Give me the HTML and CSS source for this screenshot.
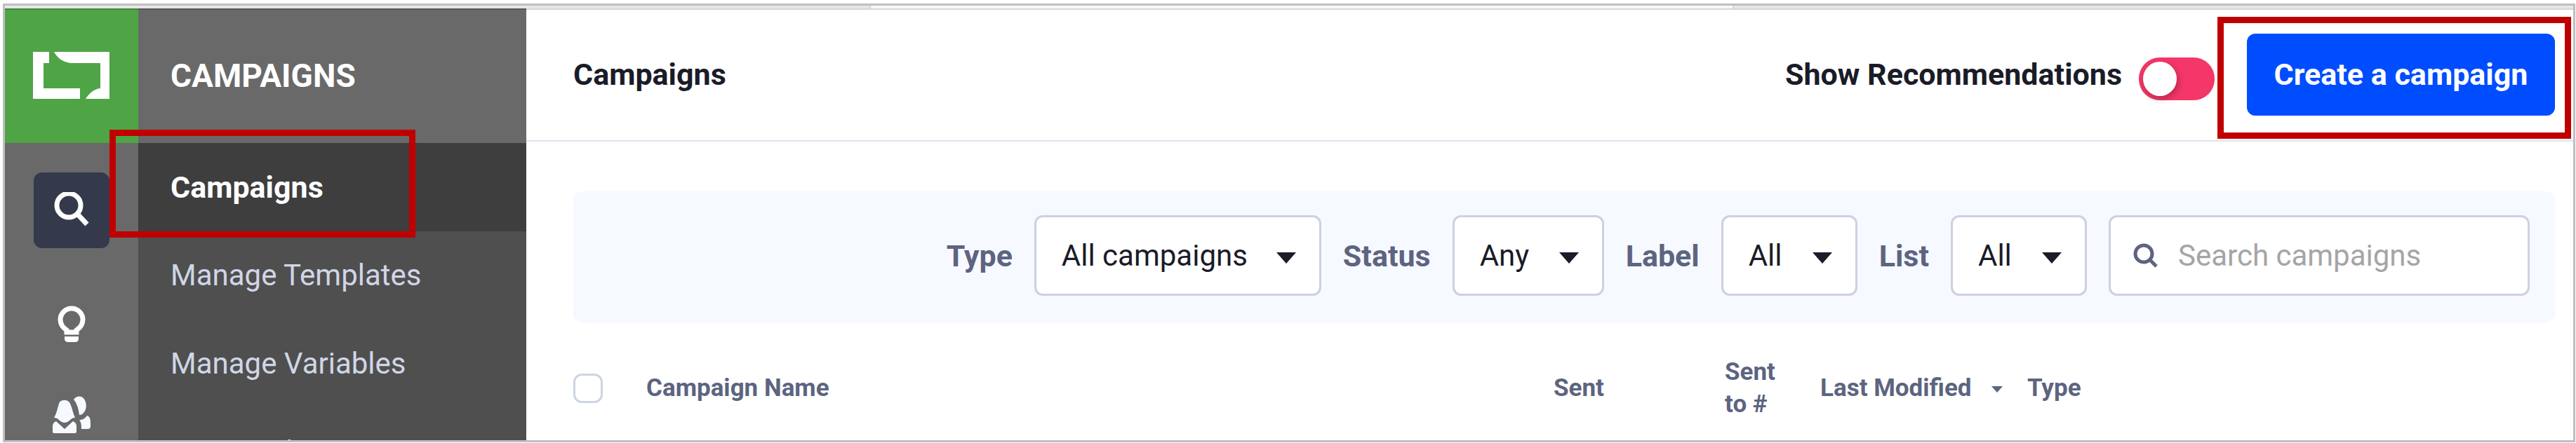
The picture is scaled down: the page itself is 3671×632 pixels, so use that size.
FILE: index.html
```html
<!DOCTYPE html>
<html lang="en">
<head>
    <meta charset="UTF-8">
    <meta name="viewport" content="width=device-width, initial-scale=1.0">
    <title>Campaigns</title>
    <link rel="stylesheet" href="styles.css">
</head>
<body>
    <div class="frame">
        <div class="tab-strip">
            <span></span>
            <span class="current"></span>
            <span></span>
        </div>
        <div class="app">
            <nav class="rail" aria-label="Main">
                <a href="#" class="logo" aria-label="Home">
                    <svg width="110" height="68" viewBox="0 0 110 68" fill="#fff">
                        <path d="M0 0H23V16H15V52H67V67H0Z"/>
                        <path d="M30 0H109V67H75C80 59 87 53 96 52V16H53C42 14 35 9 30 0Z"/>
                    </svg>
                </a>
                <a href="#" class="rail-link search" aria-label="Search">
                    <svg width="52" height="52" viewBox="0 0 52 52" fill="none" stroke="#fff" stroke-width="7">
                        <circle cx="22" cy="19" r="17"/>
                        <path d="M34 31L48 46"/>
                    </svg>
                </a>
                <a href="#" class="rail-link" aria-label="Insights">
                    <svg width="40" height="52" viewBox="0 0 40 52">
                        <path d="M13 38V35C7 31 4 26 4 20A16 16 0 0 1 36 20C36 26 33 31 27 35V38Z" fill="none" stroke="#fff" stroke-width="7"/>
                        <path d="M10 44H30V47Q30 52 25 52H15Q10 52 10 47Z" fill="#fff"/>
                    </svg>
                </a>
                <a href="#" class="rail-link people" aria-label="Audience">
                    <svg width="55" height="54" viewBox="0 0 55 54" fill="#f6f9ff">
                        <path d="M2 31C6 24 7 17 9 11C10 7 13 6 17 6C21 6 24 8 25 11C28 17 29 25 32 31C28 31 26 33 24 35C19 39 15 39 10 35C8 33 6 31 2 31Z"/>
                        <path d="M5 36L17 47L29 36Q34 38 34 43V51Q34 53 32 53H2Q0 53 0 51V43Q0 38 5 36Z"/>
                        <path d="M30 5C33 0 40 -1 44 3C49 9 49 19 44 24Q42 27 38 27C37 19 35 11 30 5Z"/>
                        <path d="M38 34C43 34 46 32 49 28C53 29 54 33 54 38V43Q54 47 50 47H41C41 42 41 38 38 34Z"/>
                    </svg>
                </a>
            </nav>

            <aside class="menu">
                <h2>CAMPAIGNS</h2>
                <ul>
                    <li class="active"><a href="#">Campaigns</a><div class="highlight"></div></li>
                    <li><a href="#">Manage Templates</a></li>
                    <li><a href="#">Manage Variables</a></li>
                    <li><a href="#">View Archives</a></li>
                </ul>
            </aside>

            <main>
                <header>
                    <h1>Campaigns</h1>
                    <label for="recommendations">Show Recommendations</label>
                    <input type="checkbox" id="recommendations" class="toggle">
                    <div class="create">
                        <button class="btn">Create a campaign</button>
                        <div class="highlight"></div>
                    </div>
                </header>

                <form class="filters">
                    <label for="type">Type</label>
                    <div class="select type">
                        <select id="type"><option>All campaigns</option></select>
                    </div>
                    <label for="status">Status</label>
                    <div class="select status">
                        <select id="status"><option>Any</option></select>
                    </div>
                    <label for="label">Label</label>
                    <div class="select">
                        <select id="label"><option>All</option></select>
                    </div>
                    <label for="list">List</label>
                    <div class="select">
                        <select id="list"><option>All</option></select>
                    </div>
                    <div class="search-box">
                        <svg width="36" height="36" viewBox="0 0 36 36" fill="none" stroke="#5d6480" stroke-width="5">
                            <circle cx="15" cy="15" r="12"/>
                            <path d="M23 23L33 33"/>
                        </svg>
                        <input type="text" placeholder="Search campaigns" aria-label="Search campaigns">
                    </div>
                </form>

                <table>
                    <thead>
                        <tr>
                            <th class="col-check"><input type="checkbox" aria-label="Select all"></th>
                            <th>Campaign Name</th>
                            <th class="col-sent">Sent</th>
                            <th class="col-count">Sent to #</th>
                            <th class="col-modified">Last Modified <span class="sort"></span></th>
                            <th class="col-type">Type</th>
                        </tr>
                    </thead>
                </table>
            </main>
        </div>
    </div>
</body>
</html>
```
FILE: styles.css
```css
* {
    box-sizing: border-box;
}
body {
    margin: 0;
    padding: 5px 1px 1px 4px;
    height: 100vh;
    font-family: Roboto, "Liberation Sans", sans-serif;
    font-size: 42px;
    color: #1a1c28;
    background: white;
}
a {
    color: inherit;
    text-decoration: none;
}
.frame {
    height: 100%;
    display: flex;
    flex-direction: column;
    border: 3px solid #bfbfbf;
    overflow: hidden;
}
.tab-strip {
    display: grid;
    grid-template-columns: 101fr 101fr 98fr;
    flex: 0 0 4px;
}
.tab-strip span {
    background: #e9e5e5;
}
.tab-strip .current {
    background: #fbf5f5;
    border-left: 2px solid #d5d2d2;
    border-right: 2px solid #d5d2d2;
}
.app {
    position: relative;
    display: flex;
    flex: 1;
    min-height: 0;
}
.app::after {
    content: "";
    position: absolute;
    top: 0;
    left: 0;
    right: 0;
    height: 2px;
    background: rgba(0, 0, 0, 0.16);
}

/* icon rail */
.rail {
    width: 190px;
    flex-shrink: 0;
    background: #696969;
    display: flex;
    flex-direction: column;
    align-items: center;
}
.logo {
    width: 100%;
    height: 192px;
    flex-shrink: 0;
    display: flex;
    align-items: center;
    justify-content: center;
    background: #4fa446;
}
.rail-link {
    width: 108px;
    height: 108px;
    flex-shrink: 0;
    margin-top: 42px;
    border-radius: 12px;
    display: flex;
    align-items: center;
    justify-content: center;
}
.rail-link + .rail-link {
    margin-top: 54px;
}
.rail-link.people {
    margin-top: 22px;
}
.rail-link.search {
    background: #343a4c;
}

/* section menu */
.menu {
    width: 553px;
    flex-shrink: 0;
    background: #4f4f4f;
}
.menu h2 {
    margin: 0;
    height: 192px;
    padding-left: 46px;
    line-height: 192px;
    font-size: 46px;
    color: white;
    background: #696969;
}
.menu ul {
    margin: 0;
    padding: 0;
    list-style: none;
}
.menu li {
    position: relative;
    height: 126px;
    padding-left: 46px;
    line-height: 126px;
    color: #d0d6e6;
}
.menu .active {
    color: white;
    font-size: 43px;
    font-weight: bold;
    background: #3e3e3e;
}
.highlight {
    position: absolute;
    border: 9px solid #c00000;
    pointer-events: none;
}
.menu .highlight {
    top: -19px;
    bottom: -9px;
    left: -41px;
    width: 436px;
}

main {
    flex: 1;
    min-width: 0;
}
header {
    height: 190px;
    padding: 0 26px 0 67px;
    display: flex;
    align-items: center;
    font-size: 43px;
    font-weight: bold;
    border-bottom: 2px solid #dfe3ee;
}
h1 {
    flex: 1;
    margin: 0;
    font-size: 43px;
}
.toggle {
    appearance: none;
    width: 108px;
    height: 61px;
    margin: 12px 46px 0 24px;
    padding: 6px;
    border-radius: 30px;
    background: #f43669;
}
.toggle::before {
    content: "";
    display: block;
    width: 48px;
    height: 49px;
    border-radius: 50%;
    background: white;
    box-shadow: 2px 4px 10px rgba(0, 0, 0, 0.25);
}
.create {
    position: relative;
}
.create .highlight {
    top: -24px;
    right: -23px;
    bottom: -33px;
    left: -42px;
}
.btn {
    display: block;
    width: 439px;
    height: 117px;
    border: none;
    border-radius: 12px;
    font: bold 43px Roboto, "Liberation Sans", sans-serif;
    color: white;
    background: #004dff;
}

/* filters */
.filters {
    margin: 71px 26px 48px 67px;
    padding: 34px 36px 38px;
    display: flex;
    justify-content: flex-end;
    align-items: center;
    gap: 31px;
    border-radius: 12px;
    background: #f6f9ff;
}
.filters label {
    font-size: 43px;
    font-weight: bold;
    color: #5d6480;
}
.select {
    position: relative;
    width: 194px;
}
.select.type {
    width: 409px;
}
.select.status {
    width: 216px;
}
.select::after {
    content: "";
    position: absolute;
    top: 53px;
    right: 36px;
    border: 14px solid transparent;
    border-top: 16px solid #1a1c28;
    border-bottom: none;
    pointer-events: none;
}
select, .search-box {
    width: 100%;
    height: 115px;
    padding: 0 36px;
    border: 3px solid #cbd1e1;
    border-radius: 12px;
    background: white;
}
select {
    appearance: none;
    font: 42px Roboto, "Liberation Sans", sans-serif;
    color: #1a1c28;
}
.search-box {
    width: 600px;
    padding: 0 32px;
    display: flex;
    align-items: center;
    gap: 28px;
}
.search-box input {
    flex: 1;
    min-width: 0;
    padding: 0;
    border: none;
    outline: none;
    font: 42px Roboto, "Liberation Sans", sans-serif;
}
.search-box input::placeholder {
    color: #a5a5a5;
}

/* campaign list */
table {
    width: calc(100% - 93px);
    margin: 0 26px 0 67px;
    table-layout: fixed;
    border-collapse: collapse;
}
th {
    padding: 0;
    text-align: left;
    font-size: 35px;
    line-height: 46px;
    color: #5d6480;
}
.col-check {
    width: 104px;
}
.col-sent {
    width: 244px;
}
.col-count {
    width: 136px;
    padding-right: 32px;
}
.col-modified {
    width: 295px;
}
.col-type {
    width: 752px;
}
th input {
    appearance: none;
    display: block;
    width: 42px;
    height: 42px;
    margin: 0;
    border: 3px solid #cdd4e4;
    border-radius: 12px;
}
.sort {
    display: inline-block;
    margin-left: 20px;
    vertical-align: middle;
    border: 8px solid transparent;
    border-top: 9px solid #5d6480;
    border-bottom: none;
}
```
